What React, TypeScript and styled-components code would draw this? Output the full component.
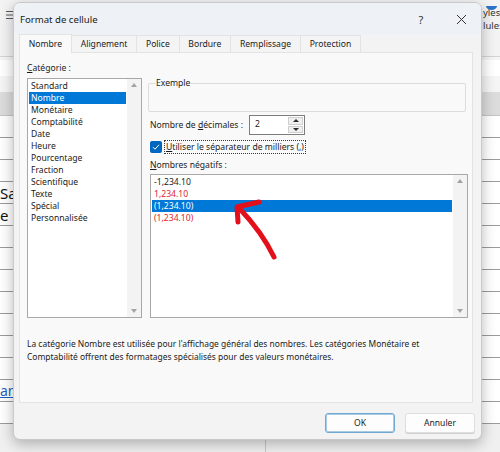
import React from "react";
import styled, { createGlobalStyle } from "styled-components";

const GlobalStyle = createGlobalStyle`
  html, body {
    margin: 0;
    padding: 0;
    background: #ffffff;
  }
  body {
    font-family: "Noto Sans", "Open Sans", sans-serif;
    color: #1b1b1b;
  }
`;

const Screen = styled.div`
  position: relative;
  width: 500px;
  height: 452px;
  overflow: hidden;
  background: #ffffff;
`;

// ---- excel sheet behind the dialog ----

const Sheet = styled.div`
  display: flex;
  flex-direction: column;
  width: 100%;
  height: 100%;
`;

const Ribbon = styled.div`
  height: 57px;
  flex: none;
  display: flex;
  justify-content: space-between;
  padding: 10px 0 0 5px;
  box-sizing: border-box;
  background: #f3f3f3;
  border-bottom: 1px solid #d4d4d4;
`;

const RibbonLabel = styled.div`
  position: relative;
  width: 17px;
  font-size: 9.5px;
  line-height: 13px;
  color: #333;
  white-space: nowrap;
  overflow: hidden;
  margin-top: -4px;
`;

const RibbonDot = styled.span`
  position: absolute;
  left: 3px;
  top: -4px;
  width: 11px;
  height: 8px;
  border-radius: 50%;
  background: #2a74c9;
`;

const FormulaRow = styled.div`
  height: 35px;
  flex: none;
  background: #f5f5f5;
  display: flex;
  align-items: center;
`;

const FormulaField = styled.div`
  flex: 1;
  height: 16px;
  margin-top: -14px;
  background: #ffffff;
`;

const HeaderRow = styled.div`
  height: 24px;
  flex: none;
  background: #dcdcdc;
  border-bottom: 1px solid #c4c4c4;
  box-sizing: border-box;
`;

const Row = styled.div`
  height: 22px;
  flex: none;
  box-sizing: border-box;
  border-bottom: 1px solid #9b9b9b;
  display: flex;
  align-items: center;
  font-size: 15px;
  color: #111;
  background: #fff;
`;

const LinkText = styled.span`
  color: #1f5fbf;
  text-decoration: underline;
  font-size: 14px;
`;

const BottomBar = styled.div`
  flex: 1;
  background: #f0f0f0;
  display: flex;
`;

const BottomCell = styled.div`
  width: 265px;
  border-right: 1px solid #c8c8c8;
`;

// ---- dialog ----

const Dialog = styled.div`
  position: absolute;
  left: 13px;
  top: 2px;
  width: 469px;
  height: 438px;
  box-sizing: border-box;
  display: flex;
  flex-direction: column;
  background: #f3f3f3;
  border: 1px solid #c9c9c9;
  border-radius: 7px;
  box-shadow: 0 4px 14px rgba(0, 0, 0, 0.28);
  overflow: hidden;
  font-size: 8.6px;
`;

const TitleBar = styled.div`
  height: 32px;
  flex: none;
  display: flex;
  align-items: center;
  background: #eef2f6;
  padding-left: 6px;
`;

const Title = styled.div`
  flex: 1;
  font-size: 9.6px;
  color: #1a1a1a;
`;

const TitleButton = styled.div`
  width: 40px;
  height: 32px;
  display: flex;
  align-items: center;
  justify-content: center;
  font-size: 11px;
  color: #333;
`;

const Body = styled.div`
  flex: none;
  padding: 0 8px 0 5px;
  display: flex;
  flex-direction: column;
`;

const Tabs = styled.div`
  height: 17px;
  display: flex;
  align-items: flex-end;
`;

const Tab = styled.div<{ $active?: boolean }>`
  height: ${(p) => (p.$active ? 19 : 17)}px;
  box-sizing: border-box;
  padding: 0 8.8px;
  display: flex;
  align-items: center;
  background: ${(p) => (p.$active ? "#f9f9f9" : "#f4f4f4")};
  border: 1px solid #e3e3e3;
  border-bottom: none;
  margin-left: ${(p) => (p.$active ? 0 : -1)}px;
  margin-bottom: ${(p) => (p.$active ? -1 : 0)}px;
  position: relative;
  z-index: ${(p) => (p.$active ? 1 : 0)};
  color: #1b1b1b;
  white-space: nowrap;
`;

const Panel = styled.div`
  height: 351px;
  box-sizing: border-box;
  background: #f9f9f9;
  border: 1px solid #e3e3e3;
  padding: 8px 4px 0 7px;
  display: flex;
  flex-direction: column;
`;

const Columns = styled.div`
  display: grid;
  grid-template-columns: 115px 1fr;
  column-gap: 8px;
`;

const Column = styled.div`
  display: flex;
  flex-direction: column;
`;

const FieldLabel = styled.div`
  height: 17px;
  line-height: 15px;
  u {
    text-decoration: underline;
  }
`;

const ListBox = styled.div<{ $height: number }>`
  height: ${(p) => p.$height}px;
  box-sizing: border-box;
  display: flex;
  background: #ffffff;
  border: 1px solid #a8a8a8;
`;

const ListItems = styled.div`
  flex: 1;
  padding: 1px;
  display: flex;
  flex-direction: column;
`;

const ListItem = styled.div<{ $selected?: boolean; $red?: boolean }>`
  height: 12px;
  line-height: 12px;
  padding-left: 2px;
  background: ${(p) => (p.$selected ? "#0078d7" : "transparent")};
  color: ${(p) => (p.$selected ? "#ffffff" : p.$red ? "#e0242c" : "#1b1b1b")};
  white-space: nowrap;
`;

const ScrollTrack = styled.div`
  width: 14px;
  flex: none;
  background: #f3f3f3;
  display: flex;
  flex-direction: column;
  justify-content: space-between;
  align-items: center;
  padding: 4px 0;
  box-sizing: border-box;
`;

const Arrow = styled.span<{ $down?: boolean }>`
  width: 0;
  height: 0;
  border-left: 3.5px solid transparent;
  border-right: 3.5px solid transparent;
  ${(p) =>
    p.$down
      ? "border-top: 4px solid #a3a3a3;"
      : "border-bottom: 4px solid #a3a3a3;"}
`;

const GroupBox = styled.fieldset`
  margin: 17px 2px 0 -2px;
  height: 34px;
  box-sizing: border-box;
  padding: 0;
  border: 1px solid #dcdcdc;
  border-radius: 2px;
`;

const Legend = styled.legend`
  margin-left: 6px;
  padding: 0 1px;
  line-height: 10px;
  color: #1b1b1b;
`;

const DecimalsRow = styled.div`
  margin-top: 3px;
  height: 20px;
  display: flex;
  align-items: center;
`;

const DecimalsLabel = styled.div`
  width: 99px;
  u {
    text-decoration: underline;
  }
`;

const SpinBox = styled.div`
  width: 56px;
  height: 20px;
  box-sizing: border-box;
  display: flex;
  background: #ffffff;
  border: 1px solid #7d7d7d;
`;

const SpinValue = styled.div`
  flex: 1;
  padding-left: 5px;
  line-height: 17px;
`;

const SpinButtons = styled.div`
  width: 15px;
  display: flex;
  flex-direction: column;
  gap: 1px;
  padding: 1px;
`;

const SpinButton = styled.div`
  flex: 1;
  display: flex;
  align-items: center;
  justify-content: center;
  background: #f0f0f0;
  border: 1px solid #cfcfcf;
`;

const SpinArrow = styled.span<{ $down?: boolean }>`
  width: 0;
  height: 0;
  border-left: 3px solid transparent;
  border-right: 3px solid transparent;
  ${(p) =>
    p.$down
      ? "border-top: 3px solid #2b2b2b;"
      : "border-bottom: 3px solid #2b2b2b;"}
`;

const CheckRow = styled.div`
  margin-top: 4px;
  height: 15px;
  display: flex;
  align-items: center;
  gap: 2px;
`;

const CheckBox = styled.div`
  width: 12px;
  height: 12px;
  border-radius: 2px;
  background: #0067c0;
  display: flex;
  align-items: center;
  justify-content: center;
`;

const FocusLabel = styled.div`
  border: 1px dotted #3a3a3a;
  padding: 0 1px;
  line-height: 12px;
  u {
    text-decoration: underline;
  }
`;

const NegLabel = styled(FieldLabel)`
  margin-top: 4px;
  height: 16px;
`;

const Description = styled.div`
  margin-top: 19px;
  font-size: 8.45px;
  line-height: 13px;
  white-space: nowrap;
  color: #1b1b1b;
`;

const Footer = styled.div`
  flex: none;
  display: flex;
  justify-content: flex-end;
  gap: 10px;
  padding: 10px 6px 0 0;
`;

const Button = styled.div<{ $primary?: boolean }>`
  width: 70px;
  height: 20px;
  box-sizing: border-box;
  display: flex;
  align-items: center;
  justify-content: center;
  border-radius: 3px;
  background: #fdfdfd;
  border: 1px solid ${(p) => (p.$primary ? "#6fa9d3" : "#dedede")};
  box-shadow: ${(p) =>
    p.$primary ? "inset 0 0 0 1px #a9cbe4" : "0 1px 0 #d0d0d0"};
  color: #1b1b1b;
`;

const Annotation = styled.svg`
  position: absolute;
  left: 0;
  top: 0;
  pointer-events: none;
`;

const categories = [
  "Standard",
  "Nombre",
  "Monétaire",
  "Comptabilité",
  "Date",
  "Heure",
  "Pourcentage",
  "Fraction",
  "Scientifique",
  "Texte",
  "Spécial",
  "Personnalisée",
];

const negatives = [
  { label: "-1,234.10", red: false },
  { label: "1,234.10", red: true },
  { label: "(1,234.10)", red: false, selected: true },
  { label: "(1,234.10)", red: true },
];

const tabs = [
  "Nombre",
  "Alignement",
  "Police",
  "Bordure",
  "Remplissage",
  "Protection",
];

const Scrollbar = () => (
  <ScrollTrack>
    <Arrow />
    <Arrow $down />
  </ScrollTrack>
);

const SheetBackground = () => {
  const rows: React.ReactNode[] = [];
  for (let i = 0; i < 14; i++) {
    let content: React.ReactNode = null;
    if (i === 3) content = "Sa";
    if (i === 4) content = "e i";
    if (i === 12) content = <LinkText>an</LinkText>;
    rows.push(<Row key={i}>{content}</Row>);
  }
  return (
    <Sheet>
      <Ribbon>
        <svg width="9" height="10" viewBox="0 0 9 10">
          <path d="M1 1.5h7M1 5h7M1 8.5h7" stroke="#5a5a5a" strokeWidth="1.2" />
        </svg>
        <RibbonLabel>
          <RibbonDot />
          yles
          <br />
          lules
        </RibbonLabel>
      </Ribbon>
      <FormulaRow>
        <FormulaField />
      </FormulaRow>
      <HeaderRow />
      {rows}
      <BottomBar>
        <BottomCell />
      </BottomBar>
    </Sheet>
  );
};

const App = () => {
  return (
    <Screen>
      <GlobalStyle />
      <SheetBackground />
      <Dialog>
        <TitleBar>
          <Title>Format de cellule</Title>
          <TitleButton>?</TitleButton>
          <TitleButton>
            <svg width="11" height="11" viewBox="0 0 11 11">
              <path d="M1 1L10 10M10 1L1 10" stroke="#333" strokeWidth="1" />
            </svg>
          </TitleButton>
        </TitleBar>
        <Body>
          <Tabs>
            {tabs.map((t, i) => (
              <Tab key={t} $active={i === 0}>
                {t}
              </Tab>
            ))}
          </Tabs>
          <Panel>
            <Columns>
              <Column>
                <FieldLabel>
                  <u>C</u>atégorie :
                </FieldLabel>
                <ListBox $height={240}>
                  <ListItems>
                    {categories.map((c) => (
                      <ListItem key={c} $selected={c === "Nombre"}>
                        {c}
                      </ListItem>
                    ))}
                  </ListItems>
                  <Scrollbar />
                </ListBox>
              </Column>
              <Column>
                <GroupBox>
                  <Legend>Exemple</Legend>
                </GroupBox>
                <DecimalsRow>
                  <DecimalsLabel>
                    Nombre de <u>d</u>écimales :
                  </DecimalsLabel>
                  <SpinBox>
                    <SpinValue>2</SpinValue>
                    <SpinButtons>
                      <SpinButton>
                        <SpinArrow />
                      </SpinButton>
                      <SpinButton>
                        <SpinArrow $down />
                      </SpinButton>
                    </SpinButtons>
                  </SpinBox>
                </DecimalsRow>
                <CheckRow>
                  <CheckBox>
                    <svg width="8" height="8" viewBox="0 0 8 8">
                      <path
                        d="M1 4.2L3 6.2L7 1.8"
                        fill="none"
                        stroke="#fff"
                        strokeWidth="1"
                      />
                    </svg>
                  </CheckBox>
                  <FocusLabel>
                    <u>U</u>tiliser le séparateur de milliers (,)
                  </FocusLabel>
                </CheckRow>
                <NegLabel>
                  <u>N</u>ombres négatifs :
                </NegLabel>
                <ListBox $height={144}>
                  <ListItems>
                    {negatives.map((n, i) => (
                      <ListItem key={i} $red={n.red} $selected={n.selected}>
                        {n.label}
                      </ListItem>
                    ))}
                  </ListItems>
                  <Scrollbar />
                </ListBox>
              </Column>
            </Columns>
            <Description>
              La catégorie Nombre est utilisée pour l'affichage général des
              nombres. Les catégories Monétaire et
              <br />
              Comptabilité offrent des formatages spécialisés pour des valeurs
              monétaires.
            </Description>
          </Panel>
        </Body>
        <Footer>
          <Button $primary>OK</Button>
          <Button>Annuler</Button>
        </Footer>
      </Dialog>
      <Annotation width="500" height="452" viewBox="0 0 500 452">
        <path
          d="M274 257 Q262 232 239 208"
          fill="none"
          stroke="#e3101b"
          strokeWidth="5"
          strokeLinecap="round"
        />
        <path
          d="M238 222 L237 207 L259 202"
          fill="none"
          stroke="#e3101b"
          strokeWidth="5"
          strokeLinecap="round"
          strokeLinejoin="round"
        />
      </Annotation>
    </Screen>
  );
};

export default App;
